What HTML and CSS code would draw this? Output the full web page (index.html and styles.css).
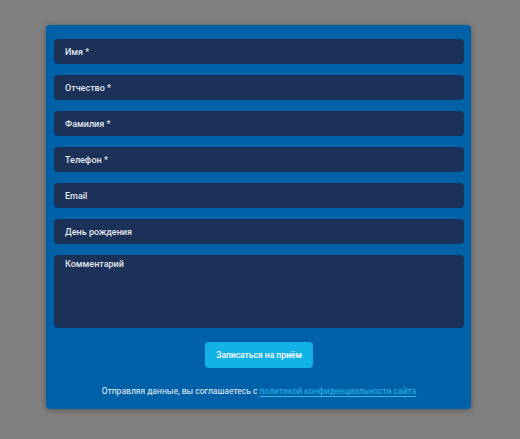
FILE: index.html
```html
<!DOCTYPE html>
<html lang="ru">
<head>
<meta charset="utf-8">
<title>Запись на приём</title>
<link rel="stylesheet" href="styles.css">
</head>
<body>
<form class="panel">
  <input class="field" type="text" placeholder="Имя *">
  <input class="field" type="text" placeholder="Отчество *">
  <input class="field" type="text" placeholder="Фамилия *">
  <input class="field" type="text" placeholder="Телефон *">
  <input class="field" type="text" placeholder="Email">
  <input class="field" type="text" placeholder="День рождения">
  <textarea class="field area" placeholder="Комментарий"></textarea>
  <div class="actions"><button class="btn" type="button">Записаться на приём</button></div>
  <p class="note">Отправляя данные, вы соглашаетесь с <a href="#" class="link">политикой конфиденциальности сайта</a></p>
</form>
</body>
</html>
```

FILE: styles.css
```css
html, body {
  margin: 0;
  padding: 0;
}
body {
  background: #808080;
  font-family: Roboto, "Liberation Sans", sans-serif;
  width: 520px;
  height: 439px;
  overflow: hidden;
}
.panel {
  box-sizing: border-box;
  width: 425px;
  height: 384px;
  margin: 25px 0 0 46px;
  padding: 14px 7px 0 8px;
  background: #0061a8;
  border-radius: 4px;
  box-shadow: 0 1px 6px rgba(0, 0, 0, 0.35);
  display: flex;
  flex-direction: column;
  gap: 11px;
}
.field {
  box-sizing: border-box;
  display: block;
  width: 100%;
  height: 25px;
  margin: 0;
  border: none;
  border-radius: 4px;
  background: #1b3157;
  color: #e8edf4;
  font-family: inherit;
  font-size: 9px;
  font-weight: 500;
  padding: 0 11px;
  outline: none;
}
.field::placeholder {
  color: #e3e8f0;
  opacity: 1;
}
.area {
  height: 73px;
  padding: 4px 11px;
  resize: none;
}
.actions {
  display: flex;
  justify-content: center;
  margin-top: 3px;
}
.btn {
  width: 108px;
  height: 26px;
  border: none;
  border-radius: 4px;
  background: #12b2e6;
  color: #ffffff;
  font-family: inherit;
  font-size: 8.5px;
  font-weight: 500;
  padding: 0;
}
.note {
  margin: 7px 0 0;
  text-align: center;
  color: #e8eef5;
  font-size: 8.5px;
  font-weight: 400;
}
.link {
  color: #2bb8ea;
  text-decoration: underline;
  text-underline-offset: 2px;
}
```
